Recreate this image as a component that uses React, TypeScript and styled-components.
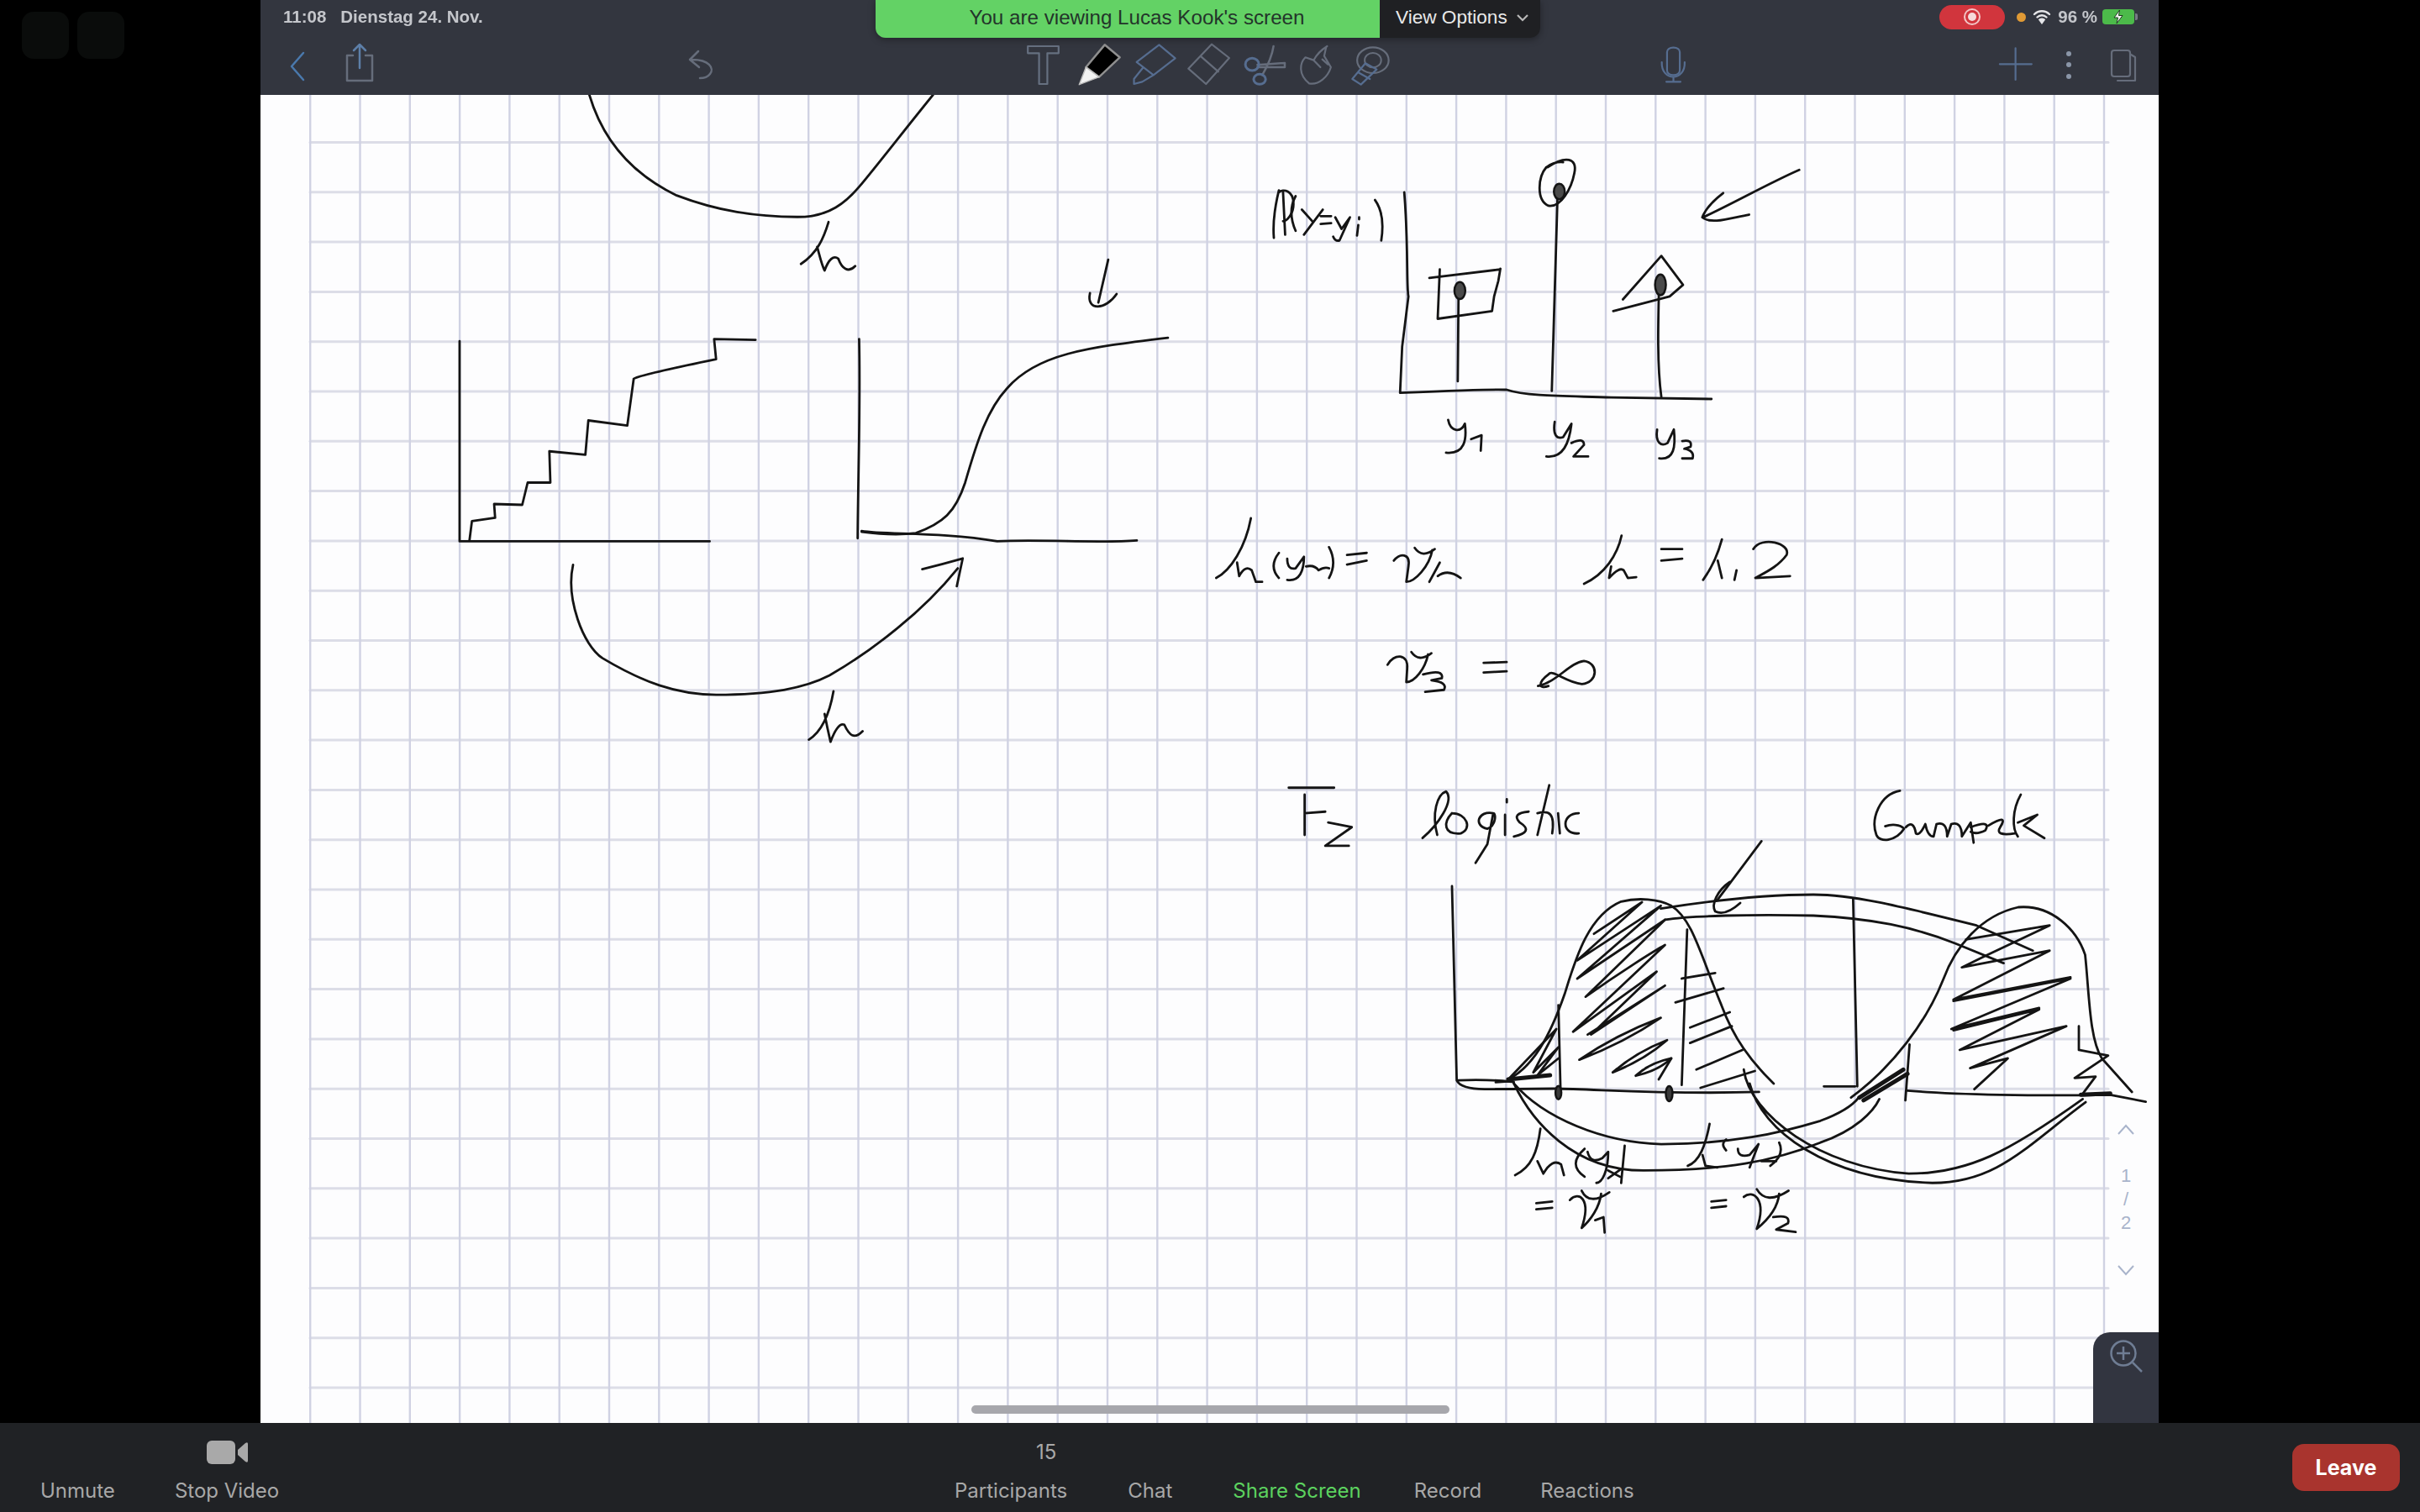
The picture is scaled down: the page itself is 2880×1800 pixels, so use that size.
import React from "react";
import styled, { createGlobalStyle } from "styled-components";

const Global = createGlobalStyle`
  html, body { margin: 0; padding: 0; background: #000; }
  #root { width: 2880px; height: 1800px; overflow: hidden; }
`;

const Page = styled.div`
  display: grid;
  grid-template-rows: 1694px 106px;
  width: 2880px;
  height: 1800px;
  background: #000;
`;

const Stage = styled.main`
  display: grid;
  grid-template-columns: 310px 2259px 311px;
  min-height: 0;
`;

const Gutter = styled.div`
  display: flex;
  align-items: flex-start;
  gap: 10px;
  padding: 14px 0 0 26px;
`;

const GhostTile = styled.div`
  width: 56px;
  height: 56px;
  border-radius: 14px;
  background: #0a0c0b;
`;

const Screen = styled.section`
  position: relative;
  display: flex;
  flex-direction: column;
  overflow: hidden;
`;

const Header = styled.header`
  display: flex;
  flex-direction: column;
  height: 113px;
  flex: none;
  background: #33363f;
  filter: blur(0.6px);
`;

const StatusBar = styled.div`
  display: flex;
  align-items: center;
  justify-content: space-between;
  height: 40px;
  padding: 0 29px 0 27px;
  font-family: "Liberation Sans", Arial, sans-serif;
  font-size: 20.5px;
  font-weight: 700;
  color: #c4c6cb;
`;

const Clock = styled.div`
  display: flex;
  gap: 17px;
`;

const StatusRight = styled.div`
  display: flex;
  align-items: center;
`;

const RecordPill = styled.div`
  display: flex;
  align-items: center;
  justify-content: center;
  width: 78px;
  height: 29px;
  border-radius: 15px;
  background: #d1353d;
`;

const RecordRing = styled.div`
  width: 10px;
  height: 10px;
  border-radius: 50%;
  background: #f6dada;
  box-shadow: 0 0 0 3px #d1353d, 0 0 0 5px #f3c6c6;
`;

const OrangeDot = styled.div`
  width: 11px;
  height: 11px;
  margin-left: 14px;
  border-radius: 50%;
  background: #e09a35;
`;

const Wifi = styled.svg`
  width: 22px;
  height: 18px;
  margin-left: 8px;
`;

const BatteryText = styled.span`
  margin-left: 8px;
`;

const Battery = styled.div`
  position: relative;
  display: flex;
  align-items: center;
  justify-content: center;
  width: 38px;
  height: 18px;
  margin-left: 6px;
  border-radius: 4px;
  background: #4cba4a;
  &::after {
    content: "";
    position: absolute;
    right: -4px;
    top: 5px;
    width: 3px;
    height: 8px;
    border-radius: 0 2px 2px 0;
    background: #777b85;
  }
`;

const ToolRow = styled.div`
  display: flex;
  align-items: flex-start;
  padding-top: 7px;
  height: 73px;
  box-sizing: border-box;
`;

const ToolSvg = styled.svg<{ $ml: number }>`
  flex: none;
  height: 60px;
  margin-left: ${(p) => p.$ml}px;
  fill: none;
  stroke-linecap: round;
  stroke-linejoin: round;
  * { vector-effect: non-scaling-stroke; }
`;

const Banner = styled.div`
  position: absolute;
  top: 0;
  left: 732px;
  display: flex;
  height: 45px;
  box-shadow: 0 2px 8px rgba(0, 0, 0, 0.35);
  border-radius: 0 0 12px 12px;
  font-family: "Liberation Sans", Arial, sans-serif;
`;

const BannerNote = styled.div`
  display: flex;
  align-items: center;
  justify-content: center;
  width: 600px;
  padding: 0 0 3px 22px;
  box-sizing: border-box;
  border-radius: 0 0 0 12px;
  background: #63d265;
  color: #23342a;
  font-size: 24.2px;
`;

const BannerMenu = styled.div`
  display: flex;
  align-items: center;
  gap: 11px;
  width: 191px;
  padding: 0 0 3px 19px;
  box-sizing: border-box;
  border-radius: 0 0 12px 0;
  background: #1f2023;
  color: #e9e9e9;
  font-size: 22.6px;
`;

const Chevron = styled.svg`
  width: 14px;
  height: 9px;
  fill: none;
  stroke: #b8b8b8;
  stroke-width: 2.2;
`;

const Canvas = styled.div`
  position: relative;
  flex: 1;
  min-height: 0;
  background: #fdfdfe;
`;

const Sheet = styled.svg`
  display: block;
  width: 2259px;
  height: 1581px;
  fill: none;
  stroke-linecap: round;
  stroke-linejoin: round;
  filter: blur(0.7px);
  * { vector-effect: non-scaling-stroke; }
`;

const PageNav = styled.div`
  position: absolute;
  top: 1225px;
  left: 2210px;
  display: flex;
  flex-direction: column;
  align-items: center;
  width: 20px;
  font-family: "Liberation Sans", Arial, sans-serif;
  font-size: 22px;
  line-height: 28px;
  color: #a9b4cb;
`;

const PageChevron = styled.svg<{ $top: number }>`
  display: block;
  width: 20px;
  height: 13px;
  fill: none;
  stroke: #a9b4cb;
  stroke-width: 2;
  margin: ${(p) => p.$top}px 0 0;
`;

const PageNumber = styled.span<{ $top?: number }>`
  margin-top: ${(p) => p.$top ?? 0}px;
`;

const ScrollBar = styled.div`
  position: absolute;
  left: 846px;
  bottom: 11px;
  width: 569px;
  height: 10px;
  border-radius: 5px;
  background: #a7a7ac;
`;

const ZoomPanel = styled.div`
  position: absolute;
  right: 0;
  bottom: 0;
  width: 78px;
  height: 108px;
  border-radius: 20px 0 0 0;
  background: #323540;
`;

const ZoomGlyph = styled.svg`
  display: block;
  width: 40px;
  height: 40px;
  margin: 9px 0 0 20px;
  fill: none;
  stroke: #6f7d94;
  stroke-width: 2.5;
`;

const BottomBar = styled.footer`
  display: grid;
  grid-template-columns: 1136px auto 1fr;
  background: #202225;
  font-family: "Inter", "Liberation Sans", sans-serif;
  font-size: 24px;
  color: #a8a8a8;
`;

const ControlGroup = styled.nav<{ $pad?: number }>`
  display: flex;
  align-items: flex-start;
  padding-left: ${(p) => p.$pad ?? 0}px;
`;

const Control = styled.div<{ $ml?: number; $active?: boolean }>`
  display: flex;
  flex-direction: column;
  align-items: center;
  margin-left: ${(p) => p.$ml ?? 0}px;
  padding-top: 21px;
  color: ${(p) => (p.$active ? "#5cd25f" : "#a8a8a8")};
`;

const ControlSlot = styled.div<{ $offset?: number }>`
  display: flex;
  align-items: center;
  justify-content: center;
  height: 28px;
  margin-bottom: 18px;
  padding-left: ${(p) => p.$offset ?? 0}px;
  line-height: 28px;
`;

const ControlLabel = styled.span`
  line-height: 28px;
  white-space: nowrap;
`;

const VideoGlyph = styled.svg`
  width: 49px;
  height: 28px;
  fill: #a9a9a9;
`;

const LeaveButton = styled.button`
  justify-self: end;
  align-self: start;
  width: 128px;
  height: 56px;
  margin: 25px 24px 0 0;
  border: 0;
  border-radius: 14px;
  background: #a9342e;
  color: #fff;
  font-family: "Inter", "Liberation Sans", sans-serif;
  font-size: 25px;
  font-weight: 700;
`;

const frame = (x: number, z: React.ReactNode, sx = 0.4464, sy = 0.3333) => (
  <g transform={`translate(${x},0) scale(${sx},${sy})`}>{z}</g>
);

type Tool = { x: number; w: number; art: React.ReactNode };

const grey = "#666d7b";
const blue = "#566d90";

const tools: Tool[] = [
  { x: 345, w: 20, art: <path d="M361 63 L347 79 L361 95" stroke="#4a79ad" strokeWidth={2.5} /> },
  {
    x: 410,
    w: 36,
    art: (
      <>
        <path d="M420 66 L413 66 L413 96 L443 96 L443 66 L435 66" stroke={grey} strokeWidth={2.5} />
        <path d="M428 81 L428 53 M421 60 L428 53 L435 60" stroke="#5d7fa8" strokeWidth={2.5} />
      </>
    ),
  },
  {
    x: 818,
    w: 32,
    art: <path d="M831 61 L821 71 L832 80 M821 71 C 845 70 850 82 845 88 C 842 92 838 93 833 93" stroke={grey} strokeWidth={2.5} />,
  },
  {
    x: 1221,
    w: 42,
    art: frame(1000, <path d="M500 165 L582 165 L582 190 L552 190 L552 300 L530 300 L530 190 L500 190 Z" stroke="#667080" strokeWidth={2.2} />),
  },
  {
    x: 1282,
    w: 52,
    art: frame(
      1000,
      <>
        <path d="M705 160 L745 205 L690 275 L655 240 Z" fill="#000" stroke="#8f8f8f" strokeWidth={2.5} />
        <path d="M655 240 L690 275 L637 302 Z" fill="#f2f2f2" stroke="#bdbdbd" strokeWidth={1.5} />
      </>
    ),
  },
  {
    x: 1346,
    w: 56,
    art: frame(
      1000,
      <path d="M850 160 L893 208 L835 268 L790 222 Z M808 240 L783 282 L783 300 L805 292 L835 268" stroke={blue} strokeWidth={2.2} />
    ),
  },
  {
    x: 1411,
    w: 56,
    art: frame(1000, <path d="M990 158 L1037 207 L975 300 L928 245 Z M960 200 L1008 256" stroke={grey} strokeWidth={2.2} />),
  },
  {
    x: 1478,
    w: 54,
    art: frame(
      1000,
      <>
        <path d="M1155 165 C 1150 210 1135 245 1125 268 M1112 232 L1185 225 L1185 240 L1112 240" stroke={grey} strokeWidth={2.5} />
        <ellipse cx="1098" cy="230" rx="18" ry="22" stroke={blue} strokeWidth={3} />
        <ellipse cx="1118" cy="283" rx="16" ry="18" stroke={blue} strokeWidth={3} />
      </>
    ),
  },
  {
    x: 1543,
    w: 46,
    art: frame(
      1000,
      <path
        d="M1298 165 C 1280 180 1270 195 1262 215 L1240 205 C 1225 225 1220 265 1250 298 C 1275 305 1300 275 1308 240 L1290 200 L1295 170 M1262 215 L1280 240 M1285 212 L1300 230"
        stroke={grey}
        strokeWidth={2.2}
      />
    ),
  },
  {
    x: 1606,
    w: 52,
    art: frame(
      1000,
      <>
        <ellipse cx="1420" cy="215" rx="42" ry="46" stroke={grey} strokeWidth={2.2} />
        <ellipse cx="1420" cy="215" rx="22" ry="26" stroke={grey} strokeWidth={2} />
        <path d="M1365 282 L1400 226 L1430 248 L1388 302 Z M1380 258 L1412 282" stroke={blue} strokeWidth={2.2} />
      </>
    ),
  },
  {
    x: 1975,
    w: 32,
    art: frame(
      1900,
      <>
        <rect x="188" y="170" width="34" height="98" rx="16" stroke={blue} strokeWidth={2.2} />
        <path d="M174 222 C 172 292 237 292 235 222 M205 278 L205 292 M186 292 L224 292" stroke={blue} strokeWidth={2.2} />
      </>
    ),
  },
  {
    x: 2378,
    w: 42,
    art: frame(1900, <path d="M1117 172 L1117 285 M1075 229 L1160 229" stroke={blue} strokeWidth={2.2} />),
  },
  {
    x: 2456,
    w: 12,
    art: (
      <>
        <circle cx="2462" cy="64" r="3" fill="#8b96a8" />
        <circle cx="2462" cy="77" r="3" fill="#8b96a8" />
        <circle cx="2462" cy="91" r="3" fill="#8b96a8" />
      </>
    ),
  },
  {
    x: 2510,
    w: 34,
    art: (
      <>
        <rect x="2513" y="60" width="22" height="31" rx="3" stroke={grey} strokeWidth={2.2} />
        <path d="M2536 65 L2541 68 L2541 96 L2520 96" stroke={grey} strokeWidth={2.2} />
      </>
    ),
  },
];

const gridX = Array.from({ length: 37 }, (_, k) => 2504 - 59.3 * k);
const gridY = Array.from({ length: 26 }, (_, k) => 1652 - 59.3 * k);

const leftSketch = [
  "M343 25 C 370 130 430 210 520 260 C 600 295 680 312 780 310 C 830 305 860 280 890 240 C 930 185 980 110 1040 25",
  "M828 322 C 818 360 805 395 772 420 M805 380 C 812 410 815 425 820 435 C 828 410 838 398 848 408 C 855 430 868 442 882 425",
  "M80 600 L80 1067 L587 1067",
  "M100 1065 L105 1020 L152 1012 L150 980 L207 982 L218 930 L264 930 L262 857 L335 865 L341 785 L420 797 L433 688 Q 440 680 600 642 L596 595 L680 597",
  "M890 595 C 893 750 888 900 887 1060 M895 1043 C 940 1052 1060 1045 1170 1067 C 1260 1062 1380 1072 1453 1065",
  "M895 1045 Q 960 1055 1005 1048 C 1060 1025 1085 1000 1105 930 C 1130 830 1150 760 1190 710 C 1250 630 1350 615 1516 592",
  "M1395 410 L1375 510 M1358 488 C 1350 530 1390 528 1412 490",
  "M310 1122 C 295 1200 330 1310 370 1340 C 450 1395 520 1425 600 1425 C 710 1425 780 1410 830 1380 C 920 1320 1020 1230 1090 1130",
  "M1018 1132 Q 1060 1120 1100 1107 L1088 1172",
  "M838 1417 C 830 1470 815 1510 788 1530 M820 1470 C 825 1500 830 1525 832 1535 C 840 1510 850 1490 860 1495 C 870 1520 880 1530 897 1510",
];

const pmfSketch = [
  "M205 145 C 195 190 190 230 193 268 M205 150 C 215 140 240 145 240 180 C 240 205 225 225 215 225 M215 150 L220 260",
  "M245 160 Q 225 200 245 250 M260 195 L285 225 M310 195 L265 260 M305 212 L330 212 M305 232 L330 230",
  "M340 215 L355 245 L375 215 L350 275 Q340 278 335 265 M395 235 L392 262 M397 215 L397 220 M435 170 C 455 200 455 240 450 275",
  "M505 150 C 515 280 510 400 515 420 L500 550 L495 670 C 600 665 720 660 750 662 C 800 680 900 678 1000 682 L1240 686",
  "M633 640 L635 400 M858 665 L872 150 M1120 680 C 1110 600 1112 500 1115 375",
  "M565 372 L735 350 M590 350 L585 478 L715 458 L720 420 L730 380 L735 348",
  "M848 85 C 890 55 920 60 912 100 C 905 140 880 190 850 185 C 820 170 825 110 845 85 Q 865 70 885 72",
  "M1028 428 L1120 315 L1172 390 L1140 420 L1005 458",
  "M1450 92 C 1380 125 1290 180 1220 215 M1268 152 C 1240 175 1225 195 1218 215 C 1240 235 1290 215 1330 208",
  "M610 740 C 615 770 640 775 650 750 C 655 790 650 830 605 825 M665 790 L690 780 L688 820",
  "M865 745 C 860 780 870 790 885 785 L905 750 C 900 800 885 840 845 835 M905 800 Q 935 785 935 805 L910 835 L945 835",
  "M1110 765 C 1105 800 1120 810 1135 800 L1150 765 C 1155 810 1150 845 1115 840 M1170 795 Q 1195 790 1190 810 L1175 815 Q 1200 820 1195 840 L1170 840",
  "M138 995 C 125 1070 90 1130 55 1150 M105 1110 L110 1145 C 120 1125 130 1120 140 1130 L150 1160 L165 1160",
  "M205 1085 Q 180 1120 205 1150 M225 1100 Q 225 1130 245 1125 L265 1095 C 265 1130 255 1160 225 1155 M270 1120 Q 290 1115 300 1130 Q 315 1120 325 1125 M325 1070 Q 345 1110 325 1150",
  "M368 1090 L415 1085 M368 1115 L415 1105",
  "M480 1105 C 495 1085 520 1085 515 1120 L510 1160 C 530 1160 565 1120 572 1078 M530 1072 Q 548 1100 578 1075 M590 1110 L565 1160 M585 1145 Q 610 1125 640 1150",
  "M1025 1040 C 1015 1090 985 1140 935 1165 M1000 1120 L995 1150 Q 1020 1120 1030 1130 L1040 1150 L1060 1148",
  "M1120 1075 L1170 1075 M1120 1105 L1170 1100",
  "M1265 1050 Q 1250 1110 1220 1155 M1255 1105 L1265 1150 M1300 1130 L1295 1155",
  "M1340 1075 C 1360 1040 1430 1060 1420 1090 C 1400 1120 1370 1135 1345 1150 L1428 1145",
  "M465 1375 C 480 1345 515 1345 512 1385 L510 1420 C 530 1420 555 1385 562 1348 M522 1342 Q 540 1370 570 1345 M550 1400 Q 600 1385 595 1410 L570 1415 Q 610 1420 600 1440 L555 1445",
  "M695 1370 L750 1368 M695 1395 L750 1392",
  "M825 1430 C 870 1420 900 1370 935 1365 C 970 1370 970 1420 930 1425 C 890 1420 860 1385 850 1400 C 825 1420 825 1440 850 1430",
];

const densityNotes = [
  "M48 48 L125 48 M75 70 L75 200 M75 130 L110 125 M115 160 L155 175 L110 235 L150 235",
  "M275 210 C 300 170 330 90 315 60 C 300 70 290 130 300 200 M325 130 C 310 160 310 200 340 195 C 360 180 350 130 325 130",
  "M395 130 C 370 120 360 170 385 180 C 400 170 400 130 395 130 L385 230 L365 290 M415 135 L415 200 M418 85 L418 95",
  "M455 125 Q 425 130 440 160 Q 465 190 430 205 M490 40 L470 200 M470 130 C 490 120 500 130 495 195 M505 130 L508 195 M540 130 C 510 130 510 200 540 195",
  "M1085 58 C 1050 70 1035 150 1045 200 C 1050 225 1078 222 1092 180 C 1085 165 1070 165 1060 172 M1095 175 Q 1108 150 1112 195 Q 1118 205 1128 165 Q 1132 205 1142 205 L1147 165 Q 1165 155 1165 205 L1172 165 Q 1190 155 1190 205 L1205 160 L1210 225",
  "M1205 175 Q 1240 150 1230 185 Q 1215 200 1205 190 M1235 170 Q 1270 130 1255 175 Q 1245 205 1280 195 M1290 70 C 1275 120 1275 180 1285 205 M1285 160 L1318 135 L1295 170 L1330 210",
  "M325 365 L333 990 Q 340 1018 380 1018 L430 1018 M335 990 Q 380 985 430 995",
  "M430 1000 C 480 1110 580 1190 680 1195 C 800 1195 880 1160 950 1120 C 985 1095 1005 1070 1015 1045",
  "M430 1000 C 460 1120 530 1280 650 1280 C 790 1280 870 1250 950 1190 C 1010 1150 1040 1090 1050 1050",
  "M820 955 C 830 1100 950 1270 1100 1290 C 1200 1290 1270 1220 1395 1050 M830 1000 C 850 1150 960 1310 1140 1320 C 1250 1320 1300 1200 1400 1060",
  "M850 220 L775 410",
  "M475 1145 C 470 1220 460 1270 432 1295 M470 1250 L480 1290 Q 495 1240 510 1260 L515 1295 M550 1210 Q 520 1260 550 1300",
  "M555 1220 Q 560 1260 580 1240 L590 1220 C 590 1280 580 1320 570 1320 M590 1280 L610 1300 M612 1275 L590 1305 M618 1200 L612 1320",
  "M762 1130 C 755 1200 745 1250 725 1265 M750 1230 L755 1265 L775 1270 M790 1180 Q 780 1195 790 1215 M810 1210 Q 810 1240 830 1230 L845 1195 L830 1270 M850 1250 L875 1250 M880 1190 Q 890 1230 865 1265",
  "M468 1385 L495 1380 M468 1405 L495 1400 M525 1375 C 540 1345 562 1370 545 1465 C 560 1440 575 1400 578 1355 M545 1345 Q 558 1395 592 1350 M568 1440 L582 1430 L584 1480",
  "M765 1380 L790 1375 M765 1400 L790 1395 M820 1365 C 835 1340 860 1370 842 1468 C 860 1440 878 1400 880 1355 M842 1340 Q 858 1392 896 1345 M870 1430 Q 900 1420 895 1450 L875 1470 L908 1478",
];

const lens = (x1: number, y1: number, x2: number, y2: number) => {
  const mx = (x1 + x2) / 2;
  const my = (y1 + y2) / 2;
  return `M${x1} ${y1} Q ${mx - 10} ${my - 14} ${x2} ${y2} Q ${mx + 10} ${my + 14} ${x1} ${y1}`;
};

const bumpSketch = [
  "M0 740 L140 738 C 250 740 400 760 630 750 M0 715 L30 712",
  "M785 730 L860 730 M985 745 C 1100 760 1300 765 1470 760 L1555 785",
  "M30 705 C 90 660 130 550 165 400 C 190 280 220 120 300 70 C 340 55 390 60 420 85 C 470 130 490 260 540 440 C 570 560 610 640 665 720",
  "M850 770 C 950 660 1030 500 1070 350 C 1100 230 1160 120 1250 90 C 1330 80 1390 170 1410 260 C 1420 400 1420 560 1450 630 L1522 750",
  "M395 95 C 500 70 640 45 760 45 C 850 45 950 80 1150 155 L1285 245 M405 135 C 460 120 620 115 760 120 C 900 130 1000 160 1100 220 L1215 290",
  "M560 0 C 530 30 515 80 525 105 C 545 120 570 95 585 75",
  "M458 170 L445 725 M855 60 L865 730 M990 580 L980 780 M150 440 L155 740",
  "M235 185 L350 72 L195 280 L395 85 L195 345 C 300 240 380 160 405 135 L215 410 C 300 320 380 245 405 225 L185 535 L385 320 L228 545 L405 370 L220 545",
  lens(200, 635, 395, 485),
  lens(280, 680, 410, 565),
  lens(335, 692, 420, 630),
  "M420 630 L390 705",
  "M1125 205 L1325 155 L1170 265 L1115 305 L1325 245 L1095 420 L1375 340 L1095 425 L1375 345 L1090 525 L1300 450 L1095 530 L1300 455 L1110 600 L1365 515 L1135 665 L1225 630 L1145 740",
  "M445 345 L525 325 M430 430 L545 380 M465 520 L560 465 M465 575 L565 515 M480 670 L590 600 M490 735 L620 675",
  "M1395 515 L1395 600 L1465 620 L1385 700 L1435 695 L1405 755",
  "M30 705 L145 525 L90 680 L150 590 L100 690 L150 630",
];

const bumpHeavy = ["M30 705 L130 690", "M880 780 L985 685 M870 770 L975 670", "M1400 760 L1470 755"];

const Ink = ({ paths, transform, weight = 2.8 }: { paths: string[]; transform: string; weight?: number }) => (
  <g transform={transform} stroke="#141414" strokeWidth={weight}>
    {paths.map((d) => (
      <path key={d} d={d} />
    ))}
  </g>
);

const leftMap = "translate(500,100) scale(0.587,0.5102)";
const pmfMap = "translate(1420,160) scale(0.4974,0.4592)";
const densityMap = "translate(1500,920) scale(0.7015,0.3699)";
const bumpMap = "translate(1780,1050) scale(0.4975,0.3333)";

export default function App() {
  return (
    <>
      <Global />
      <Page>
        <Stage>
          <Gutter>
            <GhostTile />
            <GhostTile />
          </Gutter>
          <Screen>
            <Header>
              <StatusBar>
                <Clock>
                  <span>11:08</span>
                  <span>Dienstag 24. Nov.</span>
                </Clock>
                <StatusRight>
                  <RecordPill>
                    <RecordRing />
                  </RecordPill>
                  <OrangeDot />
                  <Wifi viewBox="0 0 22 18" fill="none" stroke="#e4e5e8" strokeWidth={2.4} strokeLinecap="round">
                    <path d="M2 6 C 7 1 15 1 20 6 M5.5 9.5 C 8.5 6.5 13.5 6.5 16.5 9.5" />
                    <path d="M11 16 L8.5 12.5 C 10 11.5 12 11.5 13.5 12.5 Z" fill="#e4e5e8" />
                  </Wifi>
                  <BatteryText>96 %</BatteryText>
                  <Battery>
                    <svg width="14" height="18" viewBox="0 0 14 18">
                      <path d="M8.5 1 L2 10 L6.5 10 L5 17 L12 7.5 L7.5 7.5 Z" fill="#f4f7f2" stroke="#1f3a20" strokeWidth={1} />
                    </svg>
                  </Battery>
                </StatusRight>
              </StatusBar>
              <ToolRow>
                {tools.map((t, i) => {
                  const prev = i === 0 ? 310 : tools[i - 1].x + tools[i - 1].w;
                  return (
                    <ToolSvg key={t.x} $ml={t.x - prev} width={t.w} viewBox={`${t.x} 47 ${t.w} 60`}>
                      {t.art}
                    </ToolSvg>
                  );
                })}
              </ToolRow>
            </Header>
            <Canvas>
              <Sheet viewBox="310 113 2259 1581">
                <g stroke="#d0d2e3" strokeWidth={2.4}>
                  {gridY.map((y) => (
                    <line key={y} x1={369} x2={2509} y1={y} y2={y} stroke="#dcdde7" strokeWidth={3} />
                  ))}
                  {gridX.map((x) => (
                    <line key={x} x1={x} x2={x} y1={113} y2={1694} />
                  ))}
                </g>
                <Ink paths={leftSketch} transform={leftMap} />
                <Ink paths={pmfSketch} transform={pmfMap} />
                <g transform={pmfMap} stroke="#141414" strokeWidth={2.5} fill="#4a4a4a">
                  <ellipse cx="638" cy="405" rx="13" ry="22" />
                  <ellipse cx="876" cy="148" rx="13" ry="20" />
                  <ellipse cx="1118" cy="390" rx="13" ry="27" />
                </g>
                <Ink paths={densityNotes} transform={densityMap} />
                <Ink paths={bumpSketch} transform={bumpMap} />
                <Ink paths={bumpHeavy} transform={bumpMap} weight={5} />
                <g transform={bumpMap} stroke="#141414" strokeWidth={2.5} fill="#3a3a3a">
                  <ellipse cx="150" cy="752" rx="7" ry="24" />
                  <ellipse cx="415" cy="756" rx="8" ry="27" />
                </g>
              </Sheet>
              <PageNav>
                <PageChevron $top={0} viewBox="0 0 20 13">
                  <path d="M1 12 L10 2 L19 12" />
                </PageChevron>
                <PageNumber $top={35}>1</PageNumber>
                <PageNumber>/</PageNumber>
                <PageNumber>2</PageNumber>
                <PageChevron $top={36} viewBox="0 0 20 13">
                  <path d="M1 1 L10 11 L19 1" />
                </PageChevron>
              </PageNav>
              <ScrollBar />
              <ZoomPanel>
                <ZoomGlyph viewBox="0 0 40 40">
                  <circle cx="16" cy="16" r="14.5" />
                  <path d="M16 8 L16 24 M8 16 L24 16 M27 27 L38 38" />
                </ZoomGlyph>
              </ZoomPanel>
            </Canvas>
            <Banner>
              <BannerNote>You are viewing Lucas Kook's screen</BannerNote>
              <BannerMenu>
                View Options
                <Chevron viewBox="0 0 14 9">
                  <path d="M1 1 L7 7 L13 1" />
                </Chevron>
              </BannerMenu>
            </Banner>
          </Screen>
          <div />
        </Stage>
        <BottomBar>
          <ControlGroup $pad={48}>
            <Control>
              <ControlSlot />
              <ControlLabel>Unmute</ControlLabel>
            </Control>
            <Control $ml={71}>
              <ControlSlot>
                <VideoGlyph viewBox="0 0 49 28">
                  <rect x="0" y="0" width="34" height="28" rx="6" />
                  <path d="M37 11 L46 3 Q 49 1 49 4 L49 24 Q 49 27 46 25 L37 17 Z" />
                </VideoGlyph>
              </ControlSlot>
              <ControlLabel>Stop Video</ControlLabel>
            </Control>
          </ControlGroup>
          <ControlGroup>
            <Control>
              <ControlSlot $offset={84}>15</ControlSlot>
              <ControlLabel>Participants</ControlLabel>
            </Control>
            <Control $ml={72}>
              <ControlSlot />
              <ControlLabel>Chat</ControlLabel>
            </Control>
            <Control $ml={72} $active>
              <ControlSlot />
              <ControlLabel>Share Screen</ControlLabel>
            </Control>
            <Control $ml={63}>
              <ControlSlot />
              <ControlLabel>Record</ControlLabel>
            </Control>
            <Control $ml={70}>
              <ControlSlot />
              <ControlLabel>Reactions</ControlLabel>
            </Control>
          </ControlGroup>
          <LeaveButton>Leave</LeaveButton>
        </BottomBar>
      </Page>
    </>
  );
}
